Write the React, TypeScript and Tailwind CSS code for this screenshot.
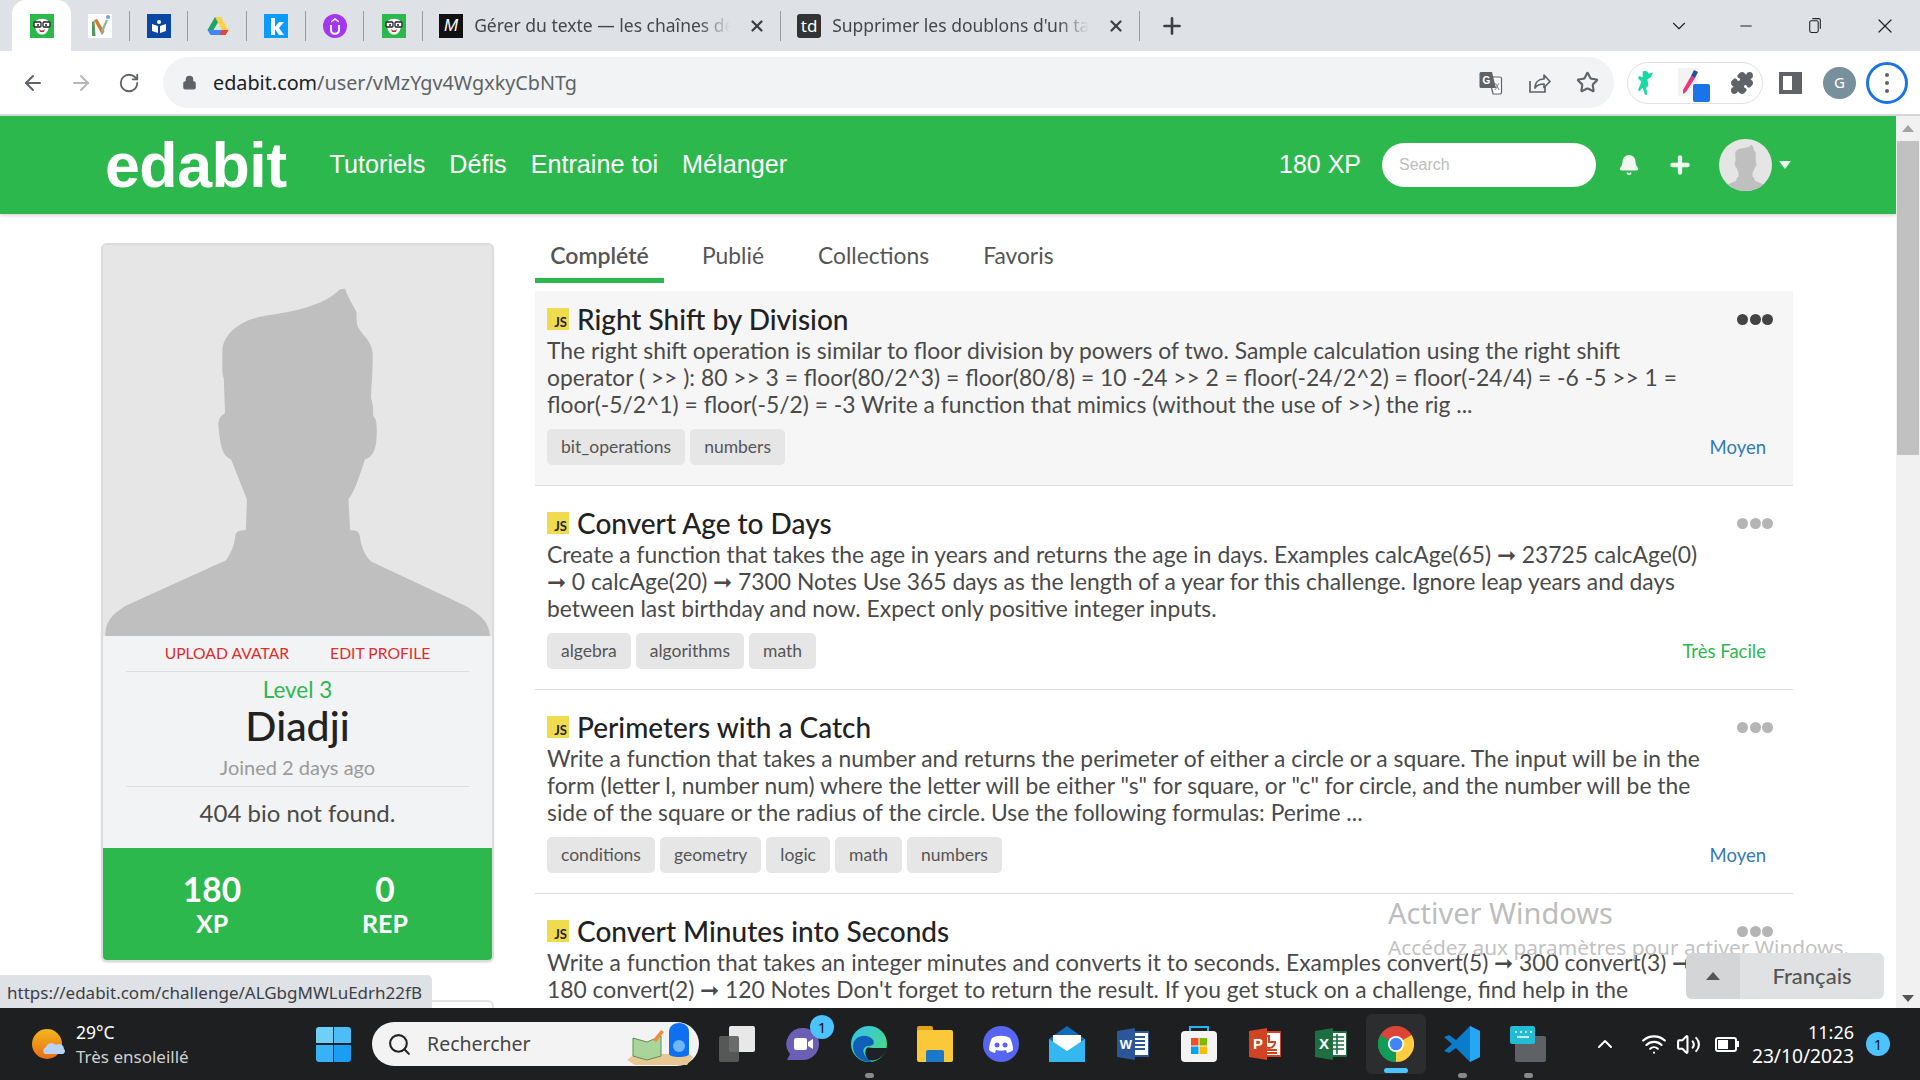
import { ArrowLeft, ArrowRight, RotateCw, Lock, Star, Puzzle, Plus, X, Minus, ChevronDown, ChevronUp, Search, Bell, Wifi, Volume2 } from "lucide-react";
import type { ReactNode } from "react";

const SILHOUETTE =
  "M310 1245C310 1195 340 1175 370 1155L675 1018C690 995 700 975 703 945C705 932 712 928 735 927L738 835L690 715C665 705 658 680 652 615C650 595 660 583 672 577L668 470C662 460 664 440 664 385C670 330 730 295 790 285C880 272 970 255 1020 205L1035 203C1045 235 1065 260 1070 275C1068 295 1070 310 1075 320C1090 345 1115 360 1118 395C1120 440 1115 480 1113 530C1120 550 1120 570 1120 585C1130 595 1132 610 1130 650C1128 690 1115 710 1095 715C1080 760 1065 810 1045 835L1050 928C1070 928 1078 930 1080 950C1085 985 1100 1010 1115 1022L1400 1155C1440 1180 1470 1200 1473 1245Z";

const challenges = [
  {
    title: "Right Shift by Division",
    text: "The right shift operation is similar to floor division by powers of two. Sample calculation using the right shift operator ( >> ): 80 >> 3 = floor(80/2^3) = floor(80/8) = 10 -24 >> 2 = floor(-24/2^2) = floor(-24/4) = -6 -5 >> 1 = floor(-5/2^1) = floor(-5/2) = -3 Write a function that mimics (without the use of >>) the rig ...",
    tags: ["bit_operations", "numbers"],
    level: "Moyen",
    easy: false,
    active: true,
  },
  {
    title: "Convert Age to Days",
    text: "Create a function that takes the age in years and returns the age in days. Examples calcAge(65) ➞ 23725 calcAge(0) ➞ 0 calcAge(20) ➞ 7300 Notes Use 365 days as the length of a year for this challenge. Ignore leap years and days between last birthday and now. Expect only positive integer inputs.",
    tags: ["algebra", "algorithms", "math"],
    level: "Très Facile",
    easy: true,
    active: false,
  },
  {
    title: "Perimeters with a Catch",
    text: "Write a function that takes a number and returns the perimeter of either a circle or a square. The input will be in the form (letter l, number num) where the letter will be either \"s\" for square, or \"c\" for circle, and the number will be the side of the square or the radius of the circle. Use the following formulas: Perime ...",
    tags: ["conditions", "geometry", "logic", "math", "numbers"],
    level: "Moyen",
    easy: false,
    active: false,
  },
  {
    title: "Convert Minutes into Seconds",
    text: "Write a function that takes an integer minutes and converts it to seconds. Examples convert(5) ➞ 300 convert(3) ➞ 180 convert(2) ➞ 120 Notes Don't forget to return the result. If you get stuck on a challenge, find help in the Resources tab.",
    tags: ["math"],
    level: "Très Facile",
    easy: true,
    active: false,
  },
];

function Silhouette({ className }: { className: string }) {
  return (
    <svg viewBox="306 72 1170 1173" preserveAspectRatio="none" className={className}>
      <path d={SILHOUETTE} fill="#bfbfbf" />
    </svg>
  );
}

function EdabitFavicon() {
  return (
    <svg viewBox="0 0 24 24" className="h-6 w-6">
      <rect width="24" height="24" fill="#2db84d" />
      <path d="M6 7c2-3 10-3 12 0 2 3 1 9-2 12-2 2-6 2-8 0-3-3-4-9-2-12z" fill="#fff" />
      <rect x="4" y="8" width="7" height="5" rx="1" fill="#fff" stroke="#222" strokeWidth="1.3" />
      <rect x="13" y="8" width="7" height="5" rx="1" fill="#fff" stroke="#222" strokeWidth="1.3" />
      <circle cx="8" cy="11" r="1" fill="#222" />
      <circle cx="16" cy="11" r="1" fill="#222" />
      <path d="M9 15c2 2 4 2 6 0l-1 3h-4z" fill="#b33" />
    </svg>
  );
}

function Favicon({ kind }: { kind: string }) {
  if (kind === "edabit") return <EdabitFavicon />;
  if (kind === "n")
    return (
      <svg viewBox="0 0 24 24" className="h-6 w-6">
        <rect width="24" height="24" fill="#fff" />
        <path d="M4 22V8l2.500-1 1 15z" fill="#4f9a5b" />
        <path d="M6 6l8 15 2.500-3.500L9 5z" fill="#d5762b" />
        <path d="M14 21l6-15-2-.5-5 11z" fill="#8fb7a0" />
        <circle cx="20" cy="3" r="2" fill="#6aa4d8" />
      </svg>
    );
  if (kind === "book")
    return (
      <svg viewBox="0 0 24 24" className="h-6 w-6">
        <rect width="24" height="24" fill="#0a47a5" />
        <circle cx="12" cy="8" r="2" fill="#fff" />
        <path d="M5 10l6 2v7l-6-2zM19 10l-6 2v7l6-2z" fill="#fff" />
      </svg>
    );
  if (kind === "drive")
    return (
      <svg viewBox="0 0 24 24" className="h-6 w-6">
        <path d="M9 3h6l-7.500 13L1.500 16z" fill="#1fa463" />
        <path d="M15 3l7.500 13h-6.500L9 3z" fill="#ffd04b" />
        <path d="M4.500 21h15l3-5H1.500z" fill="#4285f4" />
        <path d="M16 16h6.500l-3 5h-6z" fill="#ea4335" />
      </svg>
    );
  if (kind === "k")
    return (
      <svg viewBox="0 0 24 24" className="h-6 w-6">
        <rect width="24" height="24" fill="#0a9bff" />
        <path d="M7 4h4v9l4-5h5l-5 6 5 7h-5l-4-6v6H7z" fill="#fff" />
      </svg>
    );
  if (kind === "u")
    return (
      <svg viewBox="0 0 24 24" className="h-6 w-6">
        <circle cx="12" cy="12" r="12" fill="#a435f0" />
        <path d="M8 11v5c0 5 8 5 8 0v-5" fill="none" stroke="#fff" strokeWidth="2" />
        <path d="M8 7l4-3 4 3v1.500l-4-2.500-4 2.500z" fill="#fff" />
      </svg>
    );
  return null;
}

function TabSep() {
  return <div className="h-[30px] w-px bg-[#9a9da1]" />;
}

function PinnedTab({ kind, sep = true }: { kind: string; sep?: boolean }) {
  return (
    <div className="flex w-[58.700px] items-center">
      <div className="flex flex-1 justify-center pl-[1px]">
        <Favicon kind={kind} />
      </div>
      {sep && <TabSep />}
    </div>
  );
}

function BrowserTab({ icon, label, width }: { icon: ReactNode; label: string; width: string }) {
  return (
    <div className={`flex items-center ${width}`}>
      <div className="ml-[16px] shrink-0">{icon}</div>
      <div className="ml-[11px] min-w-0 flex-1 overflow-hidden whitespace-nowrap text-[17.500px] text-[#45474a] [mask-image:linear-gradient(to_right,black_88%,transparent)] font-['Noto_Sans',sans-serif]">
        {label}
      </div>
      <X size={18} strokeWidth={3} className="ml-[18px] mr-[14px] shrink-0 text-[#3c4043]" />
      <TabSep />
    </div>
  );
}

function BrowserChrome() {
  return (
    <div className="shrink-0">
      <div className="flex h-[51px] items-center bg-[#dee1e6]">
        <div className="ml-[12px] flex h-[51px] w-[59px] items-center justify-center rounded-t-[14px] bg-white">
          <EdabitFavicon />
        </div>
        <PinnedTab kind="n" />
        <PinnedTab kind="book" />
        <PinnedTab kind="drive" />
        <PinnedTab kind="k" />
        <PinnedTab kind="u" />
        <PinnedTab kind="edabit" />
        <BrowserTab
          width="w-[358px]"
          label="Gérer du texte — les chaînes de caractères"
          icon={
            <div className="flex h-6 w-6 items-center justify-center bg-[#111] text-[17px] italic text-white font-['Liberation_Sans',sans-serif]">
              M
            </div>
          }
        />
        <BrowserTab
          width="w-[359px]"
          label="Supprimer les doublons d'un tableau"
          icon={
            <div className="flex h-6 w-6 items-center justify-center rounded-[3px] bg-[#333] text-[17px] text-white font-['Noto_Sans',sans-serif]">
              td
            </div>
          }
        />
        <Plus size={26} strokeWidth={2.4} className="ml-[19px] text-[#3c4043]" />
        <div className="ml-auto flex items-center text-[#222]">
          <ChevronDown size={22} strokeWidth={1.2} className="mr-[47px]" />
          <Minus size={18} strokeWidth={1.5} className="mr-[51px]" />
          <svg viewBox="0 0 16 16" className="mr-[50px] h-[17px] w-[17px]" fill="none" stroke="#222">
            <rect x="3.500" y="3.500" width="8" height="11" rx="1.500" />
            <path d="M6 1.500h6a1.500 1.500 0 0 1 1.500 1.500v8" />
          </svg>
          <X size={24} strokeWidth={1.2} className="mr-[23px]" />
        </div>
      </div>
      <div className="flex h-[63px] items-center bg-white">
        <ArrowLeft size={24} className="ml-[21px] text-[#5f6368]" />
        <ArrowRight size={24} className="ml-[24px] text-[#b5b7ba]" />
        <RotateCw size={22} className="ml-[25px] text-[#5f6368]" />
        <div className="ml-[23px] flex h-[51px] w-[1451px] items-center rounded-full bg-[#f1f3f4]">
          <Lock size={15} fill="#5f6368" className="ml-[19px] text-[#5f6368]" />
          <div className="ml-[16px] text-[19.800px] text-[#5f6368] font-['Noto_Sans',sans-serif]">
            <span className="text-[#202124]">edabit.com</span>/user/vMzYgv4WgxkyCbNTg
          </div>
          <div className="ml-auto flex items-center">
            <svg viewBox="0 0 24 24" className="h-[24px] w-[24px]">
              <path d="M10 6h11a1.500 1.500 0 0 1 1.500 1.500v14a1.500 1.500 0 0 1-1.500 1.500h-7z" fill="#fff" stroke="#5f6368" strokeWidth="1.200" />
              <path d="M2 1h11l4 16H2a1.500 1.500 0 0 1-1.500-1.500V2.500A1.500 1.500 0 0 1 2 1z" fill="#5f6368" />
              <text x="7.500" y="12.500" textAnchor="middle" fontSize="10" fontWeight="700" fill="#fff" fontFamily="Liberation Sans">G</text>
              <text x="18" y="18.500" textAnchor="middle" fontSize="8" fill="#5f6368" fontFamily="Noto Sans">X</text>
            </svg>
            <svg viewBox="0 0 24 24" className="ml-[24px] h-[24px] w-[24px]" fill="none" stroke="#5f6368" strokeWidth="1.700">
              <path d="M3 10v11h15v-5" />
              <path d="M8 17c0-6 4-9 9-9V4l6 6.500-6 6V13c-4 0-7 1-9 4z" strokeLinejoin="round" />
            </svg>
            <Star size={23} strokeWidth={2.2} className="ml-[25px] mr-[15px] text-[#5f6368]" />
          </div>
        </div>
        <div className="ml-[13px] flex h-[42px] w-[136px] items-center rounded-full border border-[#dfe1e5]">
          <svg viewBox="0 0 24 24" className="ml-[3px] h-7 w-7">
            <path d="M10 2c3-1 5 0 5 2l4-1-2 4-3 2 1 5-2 2 1 6h-2l-2-6-3 3-1-1 3-7-3-3 1-2 3 1z" fill="#17d9a3" />
          </svg>
          <div className="relative ml-[19px] h-[30px] w-[24px]">
            <svg viewBox="0 0 24 30" className="h-full w-full">
              <rect width="20" height="28" fill="#f3f3f3" />
              <path d="M5 22L13 8l4 2-9 14-3 2z" fill="#e5397a" />
              <path d="M13 8l3-6 4 2-3 6z" fill="#2c4e9b" />
            </svg>
            <div className="absolute -bottom-[4px] right-[-8px] h-[18px] w-[17px] rounded-[2px] bg-[#1a73e8]" />
          </div>
          <Puzzle size={24} fill="#5f6368" className="ml-[28px] text-[#5f6368]" />
        </div>
        <div className="ml-[16px] h-[22px] w-[23px] border-[4px] border-r-[10px] border-[#5f6368]" />
        <div className="ml-[21px] flex h-[32px] w-[33px] items-center justify-center rounded-full bg-[#78909c] text-[15px] text-white font-['Noto_Sans',sans-serif]">
          G
        </div>
        <div className="ml-[10px] flex h-[42px] w-[42px] flex-col items-center justify-center gap-[4px] rounded-full border-[3px] border-[#1a73e8]">
          <div className="h-[4px] w-[4px] rounded-full bg-[#5f6368]" />
          <div className="h-[4px] w-[4px] rounded-full bg-[#5f6368]" />
          <div className="h-[4px] w-[4px] rounded-full bg-[#5f6368]" />
        </div>
      </div>
      <div className="h-[2px] bg-[#d5d6d7]" />
    </div>
  );
}

function SiteHeader() {
  return (
    <div className="flex h-[98px] shrink-0 items-center bg-[#2db84d] text-white shadow-[0_2px_3px_rgba(0,0,0,0.15)] font-['Liberation_Sans',sans-serif]">
      <div className="ml-[105px] text-[62.700px] font-bold leading-none tracking-[-0.5px]">edabit</div>
      <nav className="ml-[43px] flex gap-[24px] text-[25.200px]">
        <span>Tutoriels</span>
        <span>Défis</span>
        <span>Entraine toi</span>
        <span>Mélanger</span>
      </nav>
      <div className="ml-auto text-[25px]">180 XP</div>
      <div className="ml-[21px] flex h-[44px] w-[214px] items-center rounded-full bg-white pl-[17px] text-[16px] text-[#bdbdbd]">
        Search
      </div>
      <Bell size={22} fill="#eef8f0" className="ml-[22px] text-[#eef8f0]" />
      <Plus size={26} strokeWidth={4} className="ml-[27px] text-[#eef8f0]" />
      <div className="ml-[26px] h-[52px] w-[53px] overflow-hidden rounded-full bg-[#e5e5e5]">
        <Silhouette className="h-full w-full" />
      </div>
      <div className="ml-[7px] mr-[105px] h-0 w-0 border-x-[6px] border-t-[8px] border-x-transparent border-t-[#e9f7ec]" />
    </div>
  );
}

function ProfileCard() {
  return (
    <div className="w-[393px] shrink-0 font-['Lato',sans-serif]">
      <div className="overflow-hidden rounded-[6px] border-2 border-[#dcdcdc] bg-[#f2f3f5] shadow-[0_1px_2px_rgba(0,0,0,0.1)]">
        <div className="h-[391px] bg-[#e6e6e6] px-[1px]">
          <Silhouette className="h-full w-full" />
        </div>
        <div className="mx-[23px] flex h-[36px] items-center justify-center gap-[41px] border-b border-[#dedede] text-[15.700px] text-[#e22b2b]">
          <span>UPLOAD AVATAR</span>
          <span>EDIT PROFILE</span>
        </div>
        <div className="mt-[5px] text-center text-[22.500px] leading-[26px] text-[#2db84d]">Level 3</div>
        <div className="text-center text-[41px] font-medium leading-[46px] text-[#222]">Diadji</div>
        <div className="mx-[23px] mt-[4px] border-b border-[#dedede] pb-[5px] text-center text-[20px] leading-[28px] text-[#9a9a9a]">
          Joined 2 days ago
        </div>
        <div className="h-[61px] pt-[11px] text-center text-[24px] leading-[30px] text-[#4a4a4a]">404 bio not found.</div>
        <div className="flex h-[112px] bg-[#2db84d] text-center font-bold text-white">
          <div className="ml-[65px] w-[88px] pt-[20px]">
            <div className="text-[33.500px] leading-[42px]">180</div>
            <div className="text-[25px] leading-[26px]">XP</div>
          </div>
          <div className="ml-[99px] w-[60px] pt-[20px]">
            <div className="text-[33.500px] leading-[42px]">0</div>
            <div className="text-[25px] leading-[26px]">REP</div>
          </div>
        </div>
      </div>
      <div className="mt-[38px] h-[40px] rounded-[6px] border-2 border-[#e3e3e3]" />
    </div>
  );
}

function ChallengeRow({ item }: { item: (typeof challenges)[number] }) {
  return (
    <div className={`border-b border-[#dedede] px-[12px] ${item.active ? "h-[195px] bg-[#f6f6f6] pt-[16px]" : "h-[204px] bg-white pt-[25px]"}`}>
      <div className="flex h-[24px] items-center">
        <div className="flex h-[22px] w-[22px] items-end justify-end bg-[#f0db4f] pr-[2px] text-[13px] font-bold leading-[16px] text-[#222]">JS</div>
        <div className="ml-[8px] text-[28px] font-medium leading-[24px] text-[#222]">{item.title}</div>
        <div className="ml-auto mr-[8px] flex gap-[1.500px]">
          {[0, 1, 2].map((i) => (
            <div key={i} className={`h-[11px] w-[11px] rounded-full ${item.active ? "bg-[#444]" : "bg-[#b5b5b5]"}`} />
          ))}
        </div>
      </div>
      <p className="mt-[6px] w-[1158px] text-[22.850px] leading-[27px] text-[#4a4a4a]">{item.text}</p>
      <div className="mt-[11px] flex items-center gap-[5px]">
        {item.tags.map((t) => (
          <span key={t} className="flex h-[36px] items-center rounded-[5px] bg-[#e6e6e6] px-[14px] text-[17.500px] text-[#555]">
            {t}
          </span>
        ))}
        <div className={`ml-auto mr-[15px] pt-[2px] text-[18.500px] ${item.easy ? "text-[#2db84d]" : "text-[#337ab7]"}`}>{item.level}</div>
      </div>
    </div>
  );
}

function ChallengeList() {
  const tabs = ["Publié", "Collections", "Favoris"];
  return (
    <div className="ml-[41px] w-[1258px] shrink-0 font-['Lato',sans-serif]">
      <div className="flex h-[41px] items-start text-[22.800px] leading-[24px] text-[#555]">
        <div className="h-[40px] w-[129px] border-b-[5px] border-[#2db84d] text-center text-[23px] font-semibold">Complété</div>
        <div className="ml-[38px] flex gap-[54px]">
          {tabs.map((t) => (
            <span key={t}>{t}</span>
          ))}
        </div>
      </div>
      <div className="mt-[7px]">
        {challenges.map((c) => (
          <ChallengeRow key={c.title} item={c} />
        ))}
      </div>
    </div>
  );
}

function PageOverlays() {
  return (
    <>
      <div className="absolute bottom-0 left-0 flex h-[33px] w-[432px] items-center rounded-tr-[5px] bg-[#dee1e6] pl-[7px] pt-[2px] text-[17px] text-[#3c4043] font-['Noto_Sans',sans-serif]">
        https://edabit.com/challenge/ALGbgMWLuEdrh22fB
      </div>
      <div className="pointer-events-none absolute left-[1388px] top-[779px] text-[29px] leading-[36px] text-[#bdbdbd] font-['Noto_Sans',sans-serif]">Activer Windows</div>
      <div className="pointer-events-none absolute left-[1388px] top-[817px] text-[20.800px] leading-[28px] text-[#c2c2c2] font-['Noto_Sans',sans-serif]">
        Accédez aux paramètres pour activer Windows.
      </div>
      <div className="absolute bottom-[9px] left-[1686px] flex h-[46px] w-[198px] overflow-hidden rounded-[6px] bg-[#e0e1e3] font-['Lato',sans-serif]">
        <div className="flex w-[54px] items-center justify-center bg-[#d4d5d7]">
          <div className="h-0 w-0 border-x-[7px] border-b-[8px] border-x-transparent border-b-[#555]" />
        </div>
        <div className="flex flex-1 items-center justify-center pb-[1px] text-[22px] font-medium text-[#555]">Français</div>
      </div>
    </>
  );
}

function Scrollbar() {
  return (
    <div className="flex w-[24px] shrink-0 flex-col items-center bg-[#f1f1f1]">
      <div className="mt-[9px] h-0 w-0 border-x-[6px] border-b-[7px] border-x-transparent border-b-[#a3a3a3]" />
      <div className="mt-[9px] h-[314px] w-[22px] bg-[#c1c1c1]" />
      <div className="mb-[6px] mt-auto h-0 w-0 border-x-[6px] border-t-[7px] border-x-transparent border-t-[#555]" />
    </div>
  );
}

function TaskIcon({ children, w = 66, dot = false }: { children: ReactNode; w?: number; dot?: boolean }) {
  return (
    <div className="relative flex h-[60px] items-center justify-center" style={{ width: w }}>
      {children}
      {dot && <div className="absolute bottom-[-4px] h-[5px] w-[9px] rounded-full bg-[#8a8a8a]" />}
    </div>
  );
}

function Taskbar() {
  return (
    <div className="flex h-[72px] shrink-0 items-center bg-[#1d1f21] text-white font-['Noto_Sans',sans-serif]">
      <svg viewBox="0 0 34 30" className="ml-[32px] h-[30px] w-[34px] shrink-0">
        <defs>
          <linearGradient id="sun" x1="0" y1="0" x2="0" y2="1">
            <stop offset="0" stopColor="#f3b71e" />
            <stop offset="1" stopColor="#ea6d14" />
          </linearGradient>
        </defs>
        <circle cx="15" cy="15" r="15" fill="url(#sun)" />
        <path d="M13 25a4 4 0 0 1 1-7 6 6 0 0 1 10-2 5 5 0 0 1 8 4 3 3 0 0 1-1 5z" fill="#b8d3f5" />
      </svg>
      <div className="ml-[10px] w-[240px] shrink-0">
        <div className="text-[17.500px] leading-[24px]">29°C</div>
        <div className="text-[17px] leading-[25px] text-[#d0d0d0]">Très ensoleillé</div>
      </div>
      <div className="grid h-[35px] w-[35px] shrink-0 grid-cols-2 gap-[1.500px]">
        <div className="rounded-tl-[3px] bg-[#6fd0f7]" />
        <div className="rounded-tr-[3px] bg-[#4dbdf5]" />
        <div className="rounded-bl-[3px] bg-[#38b2f6]" />
        <div className="rounded-br-[3px] bg-[#1a9df2]" />
      </div>
      <div className="ml-[21px] flex h-[44px] w-[327px] shrink-0 items-center rounded-full bg-[#f3f3f3]">
        <Search size={25} strokeWidth={2} className="ml-[15px] text-[#222]" />
        <span className="ml-[15px] text-[19.500px] text-[#444]">Rechercher</span>
        <svg viewBox="0 0 66 44" className="ml-auto mr-[6px] h-[44px] w-[66px]">
          <path d="M0 38l8-6h54l4 3-6 8H8z" fill="#e8c795" />
          <path d="M6 16l14 4 14-6v20l-14 4-14-4z" fill="#a9d49a" stroke="#5e8f53" />
          <path d="M26 18l8-10 3 2-8 10z" fill="#f28a3c" />
          <path d="M42 10c0-12 20-12 20 0v22c0 4-20 4-20 0z" fill="#0e6ff0" />
          <circle cx="52" cy="24" r="6" fill="#6fb8ff" />
        </svg>
      </div>
      <div className="ml-[5px] flex shrink-0 items-center">
        <TaskIcon>
          <div className="relative h-[36px] w-[36px]">
            <div className="absolute right-0 top-0 h-[26px] w-[26px] rounded-[2px] bg-[#e8e8e8]" />
            <div className="absolute bottom-0 left-0 h-[26px] w-[20px] rounded-[2px] bg-[#5d5d5d]/90" />
          </div>
        </TaskIcon>
        <TaskIcon>
          <svg viewBox="0 0 36 36" className="h-[36px] w-[36px]">
            <path d="M18 2a16 16 0 0 1 0 32H2l3-6A16 16 0 0 1 18 2z" fill="#6a5fb5" />
            <rect x="9" y="12" width="13" height="12" rx="2" fill="#fff" />
            <path d="M23 16l5-3v10l-5-3z" fill="#fff" />
          </svg>
          <div className="absolute right-[2px] top-[1px] flex h-[24px] w-[24px] items-center justify-center rounded-full bg-[#4cc2ff] text-[15px] leading-none text-[#111]">1</div>
        </TaskIcon>
        <TaskIcon dot>
          <svg viewBox="0 0 36 36" className="h-[36px] w-[36px]">
            <defs>
              <linearGradient id="edge" x1="0" y1="0" x2="1" y2="1">
                <stop offset="0" stopColor="#35c1f1" />
                <stop offset="1" stopColor="#4de06e" />
              </linearGradient>
            </defs>
            <circle cx="18" cy="18" r="18" fill="url(#edge)" />
            <path d="M2 20c0-10 14-14 20-6 2 3 0 6-4 6-6 0-8 6-2 12 2 2 6 4 4 4C10 36 2 30 2 20z" fill="#0f5fb8" />
            <path d="M22 22h14c-2 8-10 14-18 12-2-1-6-8-2-12 1-1 4 0 6 0z" fill="#1e2228" />
          </svg>
        </TaskIcon>
        <TaskIcon>
          <div className="relative h-[36px] w-[36px]">
            <div className="absolute left-0 top-0 h-[12px] w-[16px] rounded-t-[2px] bg-[#e0a21b]" />
            <div className="absolute bottom-0 top-[4px] w-[36px] rounded-[2px] bg-[#fcc83a]" />
            <div className="absolute bottom-[0px] left-[9px] h-[12px] w-[18px] rounded-t-[2px] bg-[#1c78c8]" />
          </div>
        </TaskIcon>
        <TaskIcon>
          <svg viewBox="0 0 36 36" className="h-[36px] w-[36px]">
            <circle cx="18" cy="18" r="18" fill="#5865f2" />
            <path d="M9 12c5-3 13-3 18 0 2 4 3 8 3 12-2 2-4 2-6 3l-1-3c-3 1-7 1-10 0l-1 3c-2-1-4-1-6-3 0-4 1-8 3-12z" fill="#fff" />
            <circle cx="14" cy="19" r="2.500" fill="#5865f2" />
            <circle cx="22" cy="19" r="2.500" fill="#5865f2" />
          </svg>
        </TaskIcon>
        <TaskIcon>
          <svg viewBox="0 0 36 36" className="h-[36px] w-[36px]">
            <path d="M0 13L18 0l18 13v23H0z" fill="#0f6cbd" />
            <path d="M4 9h28v10L18 27 4 19z" fill="#fff" />
            <path d="M0 13l18 12 18-12v23H0z" fill="#35b8f0" />
          </svg>
        </TaskIcon>
        <TaskIcon>
          <svg viewBox="0 0 32 32" className="h-[32px] w-[32px]">
            <rect x="10" y="4" width="22" height="24" rx="1" fill="#fff" stroke="#2b579a" strokeWidth="2" />
            <path d="M14 9h14M14 13h14M14 17h14M14 21h14" stroke="#2b579a" strokeWidth="2" />
            <path d="M0 3l18-3v32L0 29z" fill="#2b579a" />
            <text x="9" y="21" textAnchor="middle" fontSize="13" fontWeight="700" fill="#fff" fontFamily="Liberation Sans">W</text>
          </svg>
        </TaskIcon>
        <TaskIcon>
          <svg viewBox="0 0 36 36" className="h-[36px] w-[36px]">
            <path d="M9 6V1h18v5" fill="none" stroke="#28b5f5" strokeWidth="2" />
            <rect y="5" width="36" height="31" rx="4" fill="#f4f4f4" />
            <rect x="10" y="12" width="7.500" height="7.500" fill="#f25022" />
            <rect x="18.500" y="12" width="7.500" height="7.500" fill="#7fba00" />
            <rect x="10" y="20.500" width="7.500" height="7.500" fill="#00a4ef" />
            <rect x="18.500" y="20.500" width="7.500" height="7.500" fill="#ffb900" />
          </svg>
        </TaskIcon>
        <TaskIcon>
          <svg viewBox="0 0 32 32" className="h-[32px] w-[32px]">
            <rect x="10" y="4" width="22" height="24" rx="1" fill="#fff" stroke="#d04423" strokeWidth="2" />
            <path d="M20 8a6 6 0 1 0 6 6h-6zM15 22h13M15 25h13" fill="none" stroke="#d04423" strokeWidth="2" />
            <path d="M0 3l18-3v32L0 29z" fill="#d04423" />
            <text x="9" y="21" textAnchor="middle" fontSize="15" fontWeight="700" fill="#fff" fontFamily="Liberation Sans">P</text>
          </svg>
        </TaskIcon>
        <TaskIcon>
          <svg viewBox="0 0 32 32" className="h-[32px] w-[32px]">
            <rect x="10" y="4" width="22" height="24" rx="1" fill="#fff" stroke="#1d6f42" strokeWidth="2" />
            <path d="M18 9h11M18 13h11M18 17h11M18 21h11M22 6v20" stroke="#1d6f42" strokeWidth="1.600" />
            <path d="M0 3l18-3v32L0 29z" fill="#1d6f42" />
            <text x="9" y="21" textAnchor="middle" fontSize="15" fontWeight="700" fill="#fff" fontFamily="Liberation Sans">X</text>
          </svg>
        </TaskIcon>
        <div className="relative ml-[2px] flex h-[60px] w-[60px] items-center justify-center rounded-[6px] bg-[#2b2d2f]">
          <svg viewBox="0 0 36 36" className="h-[36px] w-[36px]">
            <circle cx="18" cy="18" r="18" fill="#db4437" />
            <path d="M18 18L2.400 27A18 18 0 0 1 2.400 9z" fill="#0f9d58" />
            <path d="M18 18L2.400 27A18 18 0 0 0 18 36z" fill="#0f9d58" />
            <path d="M18 18l15.600-9A18 18 0 0 1 18 36z" fill="#ffcd40" />
            <circle cx="18" cy="18" r="8" fill="#fff" />
            <circle cx="18" cy="18" r="6.300" fill="#4285f4" />
          </svg>
          <div className="absolute bottom-[1px] h-[5px] w-[24px] rounded-full bg-[#4cc2ff]" />
        </div>
        <div className="ml-[3px]">
          <TaskIcon dot>
            <svg viewBox="0 0 36 36" className="h-[36px] w-[36px]">
              <path d="M26 0l10 5v26l-10 5L12 22l-7 5-5-2 8-7-8-7 5-2 7 5z" fill="#0a7cc9" />
              <path d="M26 0l10 5v26l-10 5z" fill="#25a7f3" />
            </svg>
          </TaskIcon>
        </div>
        <TaskIcon dot>
          <svg viewBox="0 0 36 36" className="h-[36px] w-[36px]">
            <rect x="5" y="10" width="31" height="26" rx="2" fill="#5e6166" />
            <rect width="25" height="18" rx="2" fill="#22bcd6" />
            <path d="M5 6h2M10 6h2M15 6h2M20 6h2M7 11h12" stroke="#fff" strokeWidth="1.600" />
          </svg>
        </TaskIcon>
      </div>
      <ChevronUp size={24} strokeWidth={2} className="ml-[32px] shrink-0" />
      <Wifi size={26} className="ml-[24px] shrink-0" />
      <Volume2 size={25} className="ml-[9px] shrink-0" />
      <div className="ml-[14px] flex shrink-0 items-center">
        <div className="h-[15px] w-[22px] rounded-[3px] border-2 border-white">
          <div className="ml-[1px] mt-[1px] h-[9px] w-[10px] bg-white" />
        </div>
        <div className="h-[6px] w-[2px] bg-white" />
      </div>
      <div className="ml-auto text-right leading-[24px]">
        <div className="text-[18px]">11:26</div>
        <div className="text-[19.200px]">23/10/2023</div>
      </div>
      <div className="ml-[12px] mr-[30px] flex h-[24px] w-[24px] items-center justify-center rounded-full bg-[#4cc2ff] text-[14px] text-[#111]">1</div>
    </div>
  );
}

export default function App() {
  return (
    <div className="flex h-screen w-full flex-col overflow-hidden bg-white">
      <BrowserChrome />
      <div className="relative flex min-h-0 flex-1">
        <div className="flex min-w-0 flex-1 flex-col overflow-hidden">
          <SiteHeader />
          <div className="flex min-h-0 flex-1 overflow-hidden pl-[101px] pt-[29px]">
            <ProfileCard />
            <ChallengeList />
          </div>
        </div>
        <Scrollbar />
        <PageOverlays />
      </div>
      <Taskbar />
    </div>
  );
}
